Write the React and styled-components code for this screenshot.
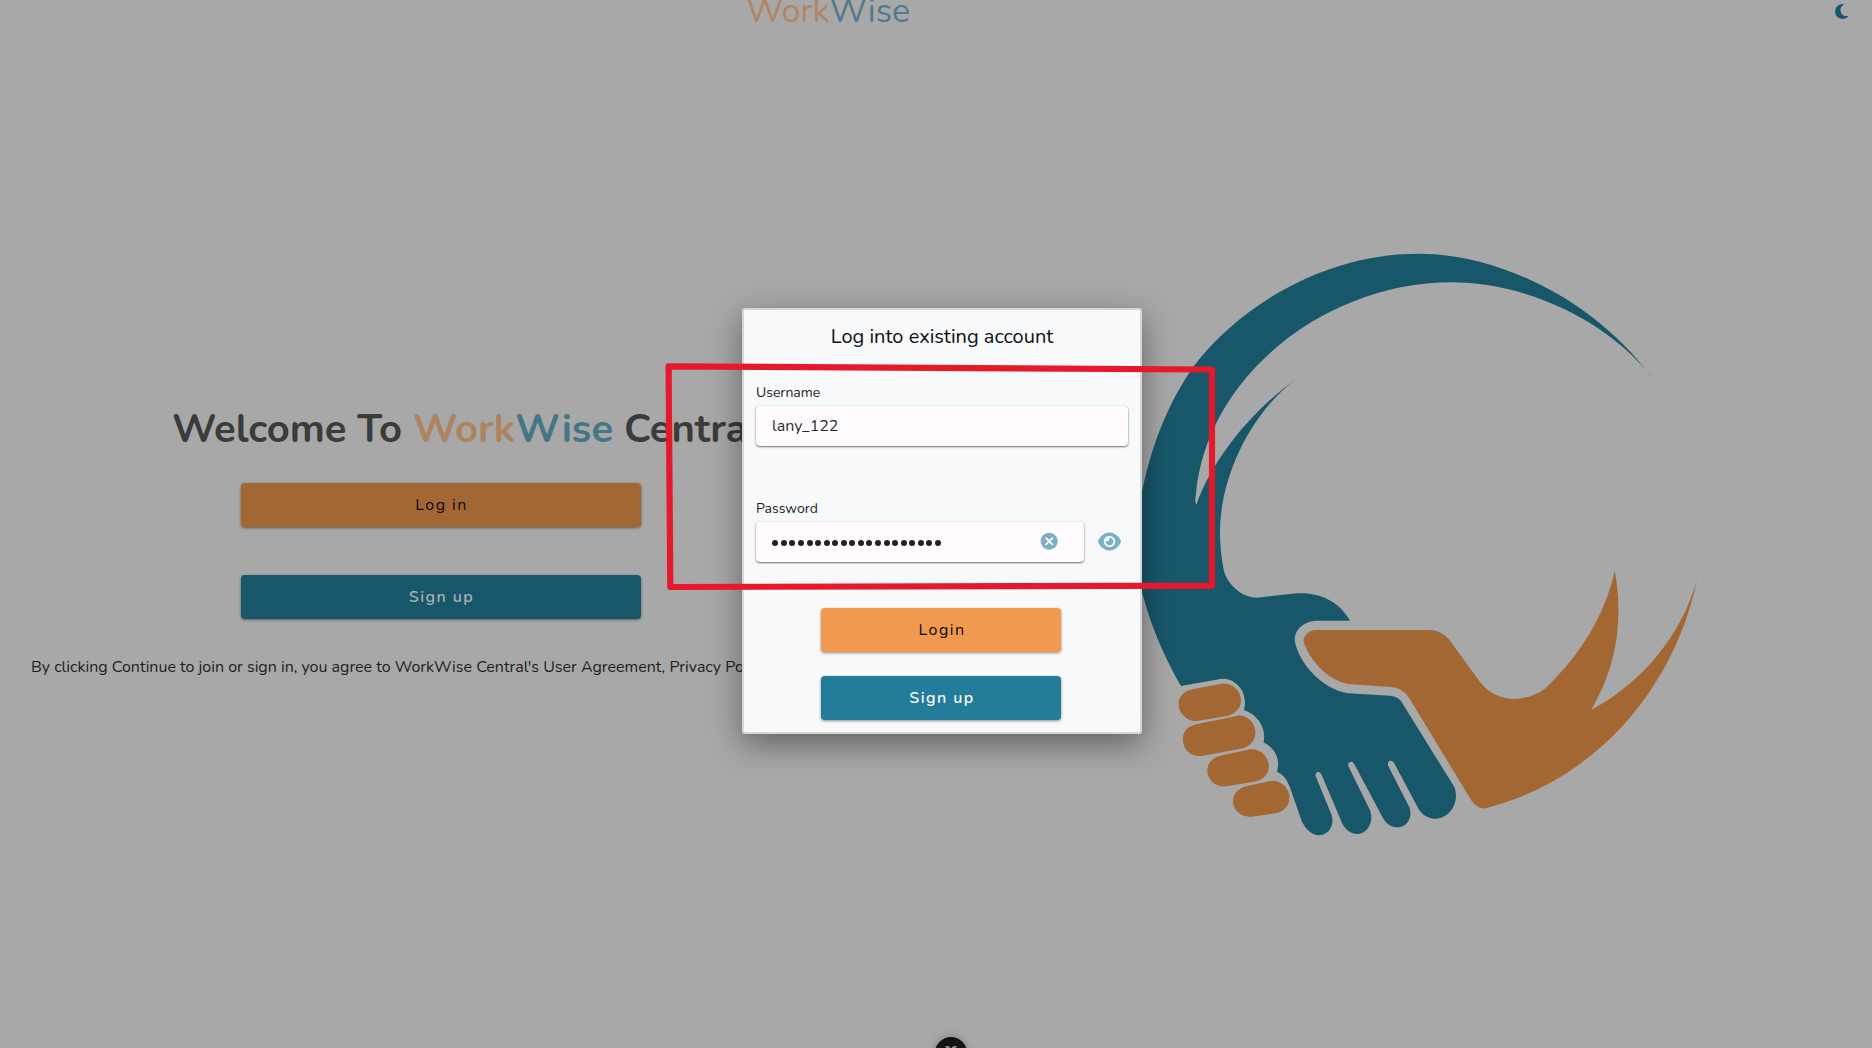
import React from "react";
import styled, { createGlobalStyle, css } from "styled-components";
import { FaEye, FaMoon } from "react-icons/fa6";
import { MdCancel } from "react-icons/md";

const Global = createGlobalStyle`
  * { box-sizing: border-box; }
  html, body { margin: 0; height: 100%; overflow: hidden; background: #a8a8a8; }
  body, button, input { font-family: Nunito, Lato, sans-serif; }
`;

const Page = styled.div`
  position: relative;
  width: 1872px;
  height: 1048px;
  overflow: hidden;
  display: flex;
  flex-direction: column;
`;

const Header = styled.header`
  display: grid;
  grid-template-columns: 746px 1fr auto;
  height: 48px;
  padding-right: 22px;
`;

const Brand = styled.div`
  grid-column: 2;
  font-size: 34px;
  line-height: 40px;
  margin-top: -9px;
  white-space: nowrap;
`;

const Orange = styled.span`
  color: ${(p) => (p.$soft ? "#b08563" : "#ae8360")};
`;
const Teal = styled.span`
  color: ${(p) => (p.$soft ? "#4f7b8b" : "#467686")};
`;

const ThemeToggle = styled.div`
  display: flex;
  padding-top: 3px;
  color: #18576a;
  font-size: 17px;
`;

const Main = styled.main`
  flex: 1;
  display: grid;
  grid-template-columns: 882px 1fr;
`;

const Intro = styled.section`
  display: flex;
  flex-direction: column;
  align-items: center;
  padding-top: 353px;
`;

const Welcome = styled.h1`
  width: 538px;
  margin: 0;
  font-size: 40px;
  line-height: 56px;
  font-weight: 700;
  color: #3a3b3b;
  white-space: nowrap;
`;

const Button = styled.button`
  display: block;
  height: 44px;
  width: ${(p) => p.$width}px;
  border: 0;
  border-radius: 4px;
  padding: 0 0 1px ${(p) => (p.$dim ? 1 : 2)}px;
  font-size: 16px;
  letter-spacing: 1.43px;
  box-shadow: 0 1px 3px rgba(0, 0, 0, 0.45);
  ${(p) =>
    p.$tone === "orange"
      ? css`
          background: ${p.$dim ? "#a36733" : "#f1994f"};
          color: #0c0a08;
        `
      : css`
          background: ${p.$dim ? "#18576a" : "#227c9a"};
          color: ${p.$dim ? "#a9b0b2" : "#f7f9fb"};
          font-weight: 600;
        `}
`;

const IntroActions = styled.div`
  display: flex;
  flex-direction: column;
  gap: 48px;
  margin-top: 26px;
`;

const Terms = styled.p`
  width: 820px;
  margin: 36px 0 0;
  font-size: 16px;
  line-height: 24px;
  color: #1d1e1e;
  white-space: nowrap;
`;

const Artwork = styled.section`
  padding: 182px 0 0 248px;
  svg { display: block; }
`;

const Dialog = styled.div`
  position: absolute;
  left: 742px;
  top: 308px;
  width: 400px;
  height: 426px;
  border: 2px solid #d4d7d9;
  border-radius: 3px;
  background: #f7f9fb;
  box-shadow: 0 10px 32px rgba(0, 0, 0, 0.42);
  padding: 13px 12px 0;
  display: flex;
  flex-direction: column;
`;

const DialogTitle = styled.h2`
  margin: 0 0 31px;
  font-size: 20px;
  line-height: 28px;
  font-weight: 400;
  text-align: center;
  color: #101112;
`;

const Field = styled.div`
  height: 116px;
`;

const Label = styled.label`
  display: block;
  font-size: 14px;
  line-height: 20px;
  height: 24px;
  padding-top: 1px;
  color: #1c1d1e;
`;

const FieldRow = styled.div`
  display: flex;
  align-items: center;
  gap: 14px;
`;

const InputBox = styled.div`
  flex: ${(p) => (p.$short ? "0 0 328px" : "1")};
  display: flex;
  align-items: center;
  height: 40px;
  padding: 0 25px 0 16px;
  border-radius: 4px;
  background: #fffbff;
  box-shadow: 0 1px 2px rgba(0, 0, 0, 0.55), 0 0 2px rgba(0, 0, 0, 0.12);
  color: #2c2d2f;
  font-size: 16px;
`;

const Dots = styled.div`
  flex: 1;
  display: flex;
  gap: 2.56px;
  padding: 2px 0 0 0.4px;
  i {
    width: 6px;
    height: 6px;
    border-radius: 50%;
    background: #222;
  }
`;

const FieldIcon = styled.span`
  display: flex;
  color: #7bafc3;
  font-size: ${(p) => p.$size}px;
  padding-bottom: 1px;
`;

const DialogActions = styled.div`
  display: flex;
  flex-direction: column;
  align-items: center;
  gap: 24px;
  margin-top: -6px;
  padding-right: 2px;
`;

const Marker = styled.svg`
  position: absolute;
  left: 0;
  top: 0;
`;

const Bubble = styled.div`
  position: absolute;
  left: 935px;
  top: 1037px;
  width: 32px;
  height: 32px;
  border-radius: 50%;
  background: #131313;
  box-shadow: 0 0 8px rgba(0, 0, 0, 0.25);
  display: flex;
  justify-content: center;
  padding-top: 9px;
`;

function Handshake() {
  return (
    <svg width="600" height="620" viewBox="0 0 1568 1860" preserveAspectRatio="none">
      <path
        fill="#18576a"
        d="M1360 437 C1200 195 950 71 755 71 C510 71 290 225 167 408 C80 550 32 720 12 930 C16 1070 60 1220 133 1368 L236 1347 C275 1342 310 1385 298 1440 C335 1455 357 1495 349 1537 C378 1555 394 1585 384 1625 C405 1635 412 1655 418 1672 L447 1768 C456 1795 474 1816 494 1816 C516 1816 536 1790 527 1755 L485 1638 Q484 1627 491 1625 Q497 1625 501 1635 L553 1776 C560 1796 576 1812 594 1812 C618 1812 638 1780 628 1742 L570 1607 Q569 1596 577 1595 Q583 1594 587 1604 L660 1762 C668 1780 682 1792 697 1792 C722 1792 740 1765 730 1732 L675 1608 Q672 1594 680 1592 Q687 1591 692 1603 L750 1728 C760 1753 778 1766 797 1766 C835 1766 862 1718 848 1672 L713 1422 Q702 1398 680 1397 L570 1390 C500 1377 444 1300 432 1240 C424 1205 452 1173 487 1172 L575 1172 C545 1110 490 1085 435 1090 L332 1103 C290 1103 253 1060 245 1020 C238 980 235 940 235 900 C238 730 320 545 432 449 C310 548 210 700 174 823 Q168 820 172 795 C200 430 520 157 840 157 C1040 157 1250 275 1363 440 Z"
      />
      <g fill="#a36733">
        <path d="M485 1200 L785 1200 Q812 1202 833 1227 L915 1356 C935 1388 970 1407 1005 1407 C1045 1405 1073 1387 1090 1370 C1175 1275 1240 1160 1267 1022 C1290 1170 1272 1310 1205 1440 C1335 1360 1440 1220 1482 1049 C1420 1385 1210 1652 930 1735 Q908 1737 893 1713 L730 1405 Q712 1373 682 1371 L570 1362 C510 1348 468 1285 454 1237 C452 1218 466 1201 485 1200 Z" />
        <path d="M170 1376 L240 1361 C262 1358 290 1378 290 1412 C290 1440 268 1455 250 1459 L175 1473 C150 1476 127 1450 127 1422 C127 1395 145 1380 170 1376 Z" />
        <path d="M180 1481 L282 1457 C305 1454 328 1478 328 1508 C328 1535 308 1552 290 1556 L187 1578 C160 1582 138 1560 138 1528 C138 1500 155 1485 180 1481 Z" />
        <path d="M245 1575 L315 1558 C340 1555 363 1580 363 1610 C362 1635 345 1650 325 1655 L252 1669 C225 1673 202 1650 202 1622 C202 1595 220 1580 245 1575 Z" />
        <path d="M310 1667 L370 1652 C395 1650 417 1675 417 1702 C417 1730 398 1747 380 1750 L318 1760 C290 1763 269 1740 269 1714 C269 1687 290 1670 310 1667 Z" />
      </g>
    </svg>
  );
}

export default function App() {
  return (
    <>
      <Global />
      <Page>
        <Header>
          <Brand>
            <Orange $soft>Work</Orange>
            <Teal $soft>Wise</Teal>
          </Brand>
          <ThemeToggle>
            <FaMoon />
          </ThemeToggle>
        </Header>
        <Main>
          <Intro>
            <Welcome>
              Welcome To <Orange>Work</Orange>
              <Teal>Wise</Teal> Central!
            </Welcome>
            <IntroActions>
              <Button $width={400} $tone="orange" $dim>Log in</Button>
              <Button $width={400} $tone="teal" $dim>Sign up</Button>
            </IntroActions>
            <Terms>
              By clicking Continue to join or sign in, you agree to WorkWise Central's User Agreement, Privacy Policy
            </Terms>
          </Intro>
          <Artwork>
            <Handshake />
          </Artwork>
        </Main>

        <Dialog>
          <DialogTitle>Log into existing account</DialogTitle>
          <Field>
            <Label>Username</Label>
            <InputBox>lany_122</InputBox>
          </Field>
          <Field>
            <Label>Password</Label>
            <FieldRow>
              <InputBox $short>
                <Dots>
                  {Array.from({ length: 20 }, (_, i) => (
                    <i key={i} />
                  ))}
                </Dots>
                <FieldIcon $size={20.4}>
                  <MdCancel />
                </FieldIcon>
              </InputBox>
              <FieldIcon $size={23}>
                <FaEye />
              </FieldIcon>
            </FieldRow>
          </Field>
          <DialogActions>
            <Button $width={240} $tone="orange">Login</Button>
            <Button $width={240} $tone="teal">Sign up</Button>
          </DialogActions>
        </Dialog>

        <Bubble>
          <svg width="14" height="14" viewBox="0 0 14 14" fill="#8a8a8a">
            <path d="M1 0h4l2 3 2-3h4L9 7l4 7H9l-2-3-2 3H1l4-7z" />
          </svg>
        </Bubble>

        <Marker width="1872" height="1048" fill="none">
          <path
            d="M668.6 366.3 L1212 369.5 L1212 585.6 L670.3 587 Z"
            stroke="#e6182b"
            strokeWidth="6.2"
            strokeLinejoin="round"
          />
        </Marker>
      </Page>
    </>
  );
}
